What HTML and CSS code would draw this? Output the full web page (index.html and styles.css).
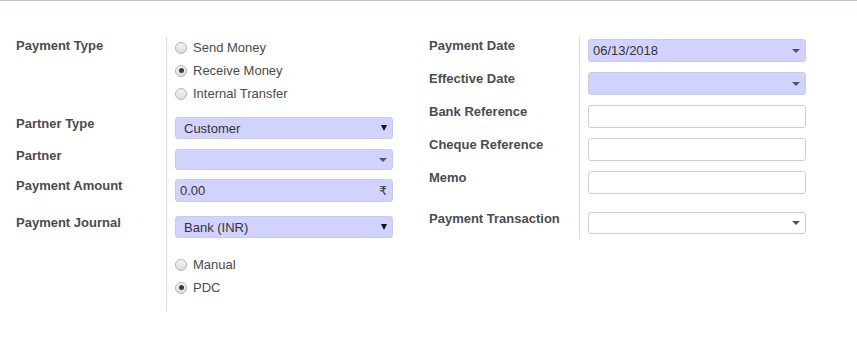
FILE: index.html
```html
<!DOCTYPE html>
<html>
<head>
  <title>Register Payment</title>
  <link rel="stylesheet" href="styles.css">
</head>
<body>
  <div class="topline"></div>

  <div class="sheet">
    <!-- left group -->
    <div class="group">
      <div class="row r-type">
        <div class="label">Payment Type</div>
        <div class="field">
          <label class="radio"><span class="dot"></span>Send Money</label>
          <label class="radio"><span class="dot checked"></span>Receive Money</label>
          <label class="radio"><span class="dot"></span>Internal Transfer</label>
        </div>
      </div>
      <div class="row r-ptype">
        <div class="label">Partner Type</div>
        <div class="field">
          <div class="input required select">Customer<span class="arrow"></span></div>
        </div>
      </div>
      <div class="row r-partner">
        <div class="label">Partner</div>
        <div class="field">
          <div class="input required short"><span class="caret"></span></div>
        </div>
      </div>
      <div class="row r-amount">
        <div class="label">Payment Amount</div>
        <div class="field">
          <div class="input required">0.00<span class="currency">₹</span></div>
        </div>
      </div>
      <div class="row r-journal">
        <div class="label">Payment Journal</div>
        <div class="field">
          <div class="input required select">Bank (INR)<span class="arrow"></span></div>
        </div>
      </div>
      <div class="row r-method">
        <div class="label"></div>
        <div class="field">
          <label class="radio"><span class="dot"></span>Manual</label>
          <label class="radio"><span class="dot checked"></span>PDC</label>
        </div>
      </div>
    </div>

    <!-- right group -->
    <div class="group">
      <div class="row r-date">
        <div class="label">Payment Date</div>
        <div class="field">
          <div class="input required">06/13/2018<span class="caret"></span></div>
        </div>
      </div>
      <div class="row">
        <div class="label">Effective Date</div>
        <div class="field">
          <div class="input required"><span class="caret"></span></div>
        </div>
      </div>
      <div class="row">
        <div class="label">Bank Reference</div>
        <div class="field"><div class="input"></div></div>
      </div>
      <div class="row">
        <div class="label">Cheque Reference</div>
        <div class="field"><div class="input"></div></div>
      </div>
      <div class="row">
        <div class="label">Memo</div>
        <div class="field"><div class="input"></div></div>
      </div>
      <div class="row r-trans">
        <div class="label">Payment Transaction</div>
        <div class="field">
          <div class="input short"><span class="caret"></span></div>
        </div>
      </div>
    </div>
  </div>
</body>
</html>
```

FILE: styles.css
```css
body {
  margin: 0;
  font-family: "Liberation Sans", Arial, sans-serif;
  font-size: 13px;
  color: #4c4c4c;
  background: #fff;
}
.topline {
  height: 1px;
  background-color: #c4c2d4;
}
.sheet {
  display: flex;
  gap: 36px;
  padding: 36px 0 0 16px;
}
.group {
  width: 377px;
}
.row {
  display: grid;
  grid-template-columns: 150px 227px;
}
.label {
  font-weight: bold;
  line-height: 15px;
  padding-top: 4px;
  color: #4c4c4c;
}
.field {
  border-left: 1px solid #dcdcdc;
  padding: 5px 0 5px 8px;
}

/* inputs */
.input {
  box-sizing: border-box;
  height: 23px;
  border: 1px solid #cfcfcf;
  border-radius: 3px;
  background-color: #fff;
  display: flex;
  align-items: center;
  padding: 0 4px;
  color: #333;
}
.input.required {
  background-color: #d2d2ff;
  border-color: #cbcbe8;
}
.input.short {
  height: 22px;
}
.select {
  padding: 0 5px 0 8px;
  height: 22px;
}
.arrow,
.caret,
.currency {
  margin-left: auto;
}
.arrow {
  width: 0;
  height: 0;
  border-left: 3px solid transparent;
  border-right: 3px solid transparent;
  border-top: 6px solid #111;
}
.caret {
  width: 0;
  height: 0;
  border-left: 4px solid transparent;
  border-right: 4px solid transparent;
  border-top: 4px solid #555;
  margin-right: 1px;
}
.currency {
  font-family: "DejaVu Sans", "Noto Sans", sans-serif;
  font-size: 12px;
  margin-right: 1px;
}

/* radios */
.radio {
  display: flex;
  align-items: center;
  gap: 6px;
  height: 23px;
  color: #4c4c4c;
}
.dot {
  box-sizing: border-box;
  width: 12px;
  height: 12px;
  border-radius: 50%;
  border: 1px solid #b4b4b4;
  background: linear-gradient(#f4f4f4, #dcdcdc);
  display: flex;
  align-items: center;
  justify-content: center;
}
.dot.checked::after {
  content: "";
  width: 5px;
  height: 5px;
  border-radius: 50%;
  background-color: #3a3a3a;
}

/* row spacing */
.r-type .field { padding: 0 0 6px 8px; }
.r-type .radio:first-child { margin-top: -1px; }
.r-type .radio:last-child { margin-bottom: 1px; }
.r-type .label { padding-top: 1px; }
.r-ptype .label { padding-top: 4px; }
.r-partner .input { height: 21px; }
.r-amount .field { padding: 4px 0 4px 8px; }
.r-amount .label { padding-top: 3px; }
.r-journal .field { padding: 10px 0 5px 8px; }
.r-journal .label { padding-top: 9px; }
.r-method .field { padding: 10px 0 12px 8px; }
.r-date .field { padding: 2px 0 5px 8px; }
.r-date .label { padding-top: 1px; }
.r-trans .field { padding: 13px 0 5px 8px; }
.r-trans .label { padding-top: 12px; }
```
